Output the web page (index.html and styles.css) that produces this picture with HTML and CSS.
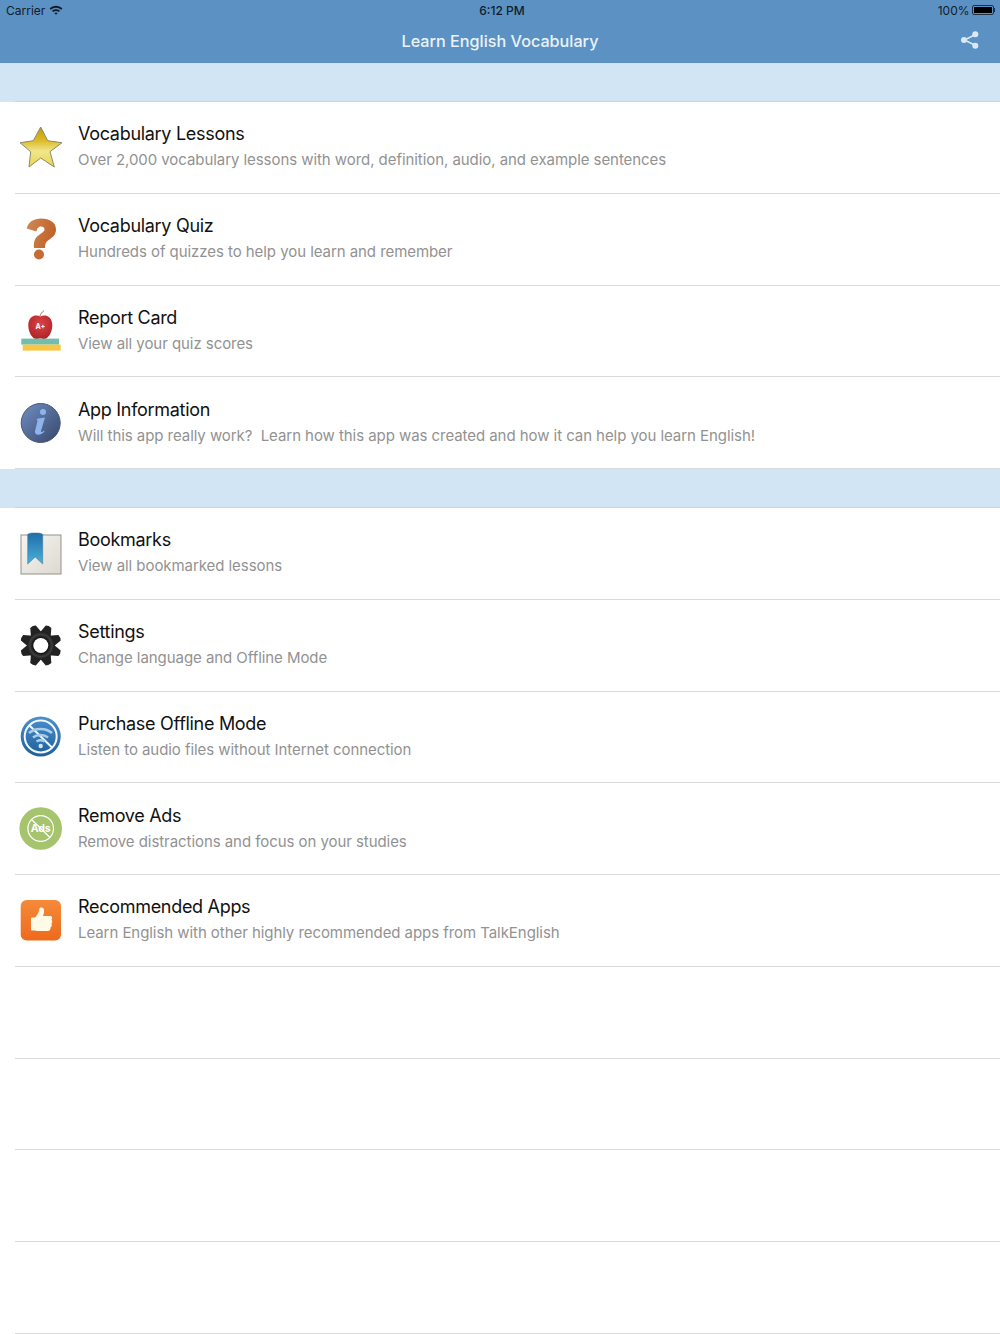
FILE: index.html
```html
<!DOCTYPE html>
<html lang="en">
<head>
    <meta charset="UTF-8">
    <meta name="viewport" content="width=device-width, initial-scale=1.0">
    <title>Learn English Vocabulary</title>
    <link rel="stylesheet" href="styles.css">
</head>
<body>

    <header class="top">
        <div class="status">
            <div class="status-left">
                <span>Carrier</span>
                <svg class="wifi" width="14" height="10" viewBox="0 0 14 10">
                    <path d="M0.6 3.4C4.2 0 9.8 0 13.4 3.4L12.2 4.7C9.2 2 4.8 2 1.8 4.7Z" fill="#111c2b"/>
                    <path d="M3 5.8C5.3 3.8 8.7 3.8 11 5.8L9.8 7C8.2 5.7 5.8 5.7 4.2 7Z" fill="#111c2b"/>
                    <path d="M5.3 8C6.3 7.2 7.7 7.2 8.7 8L7 9.8Z" fill="#111c2b"/>
                </svg>
            </div>
            <div class="status-time">6:12 PM</div>
            <div class="status-right">
                <span>100%</span>
                <span class="battery"><span class="battery-fill"></span></span>
                <span class="battery-tip"></span>
            </div>
        </div>
        <div class="navbar">
            <h1>Learn English Vocabulary</h1>
            <svg class="share" width="20" height="20" viewBox="0 0 20 20">
                <path d="M15.5 4.5L4.5 10L15.5 15.5" fill="none" stroke="#dce9f5" stroke-width="1.5"/>
                <circle cx="15.3" cy="4.3" r="3" fill="#dce9f5"/>
                <circle cx="4" cy="10" r="3" fill="#dce9f5"/>
                <circle cx="15.3" cy="15.7" r="3" fill="#dce9f5"/>
            </svg>
        </div>
    </header>

    <div class="section"></div>

    <div class="row">
        <svg class="icon" width="44" height="44" viewBox="0 0 44 44">
            <defs>
                <linearGradient id="starFill" x1="0" y1="0" x2="0" y2="1">
                    <stop offset="0" stop-color="#bd9a10"/>
                    <stop offset="0.35" stop-color="#dcbc2a"/>
                    <stop offset="0.6" stop-color="#f0e68c"/>
                    <stop offset="1" stop-color="#e9d44e"/>
                </linearGradient>
            </defs>
            <path d="M21.7 1L28.700 14.700L43 16.700L31 25.700L35.300 41L21.700 32L10 41L11.700 25.700L1 16.700L14.300 14.700Z" fill="url(#starFill)" stroke="#8d8a6c" stroke-width="1"/>
        </svg>
        <div class="text">
            <div class="title">Vocabulary Lessons</div>
            <div class="sub">Over 2,000 vocabulary lessons with word, definition, audio, and example sentences</div>
        </div>
    </div>
    <div class="row">
        <svg class="icon" width="44" height="44" viewBox="0 0 44 44">
            <defs>
                <linearGradient id="qFill" x1="0" y1="0" x2="1" y2="0.3">
                    <stop offset="0" stop-color="#d08a58"/>
                    <stop offset="1" stop-color="#c0632a"/>
                </linearGradient>
            </defs>
            <path d="M7.700 10.500C9 4 15 0.500 22 0.500C31 0.500 37 4.500 37 11.500C37 17.500 33 19.500 29 22.500C26.500 24.500 26 26.500 26 30H15C14.500 25 15 20.500 20 17C23.500 14.500 25.500 13.500 25.500 11.500C25.500 9.500 24 8.500 22 8.500C19 8.500 18 11 17.500 13.500Z" fill="url(#qFill)"/>
            <circle cx="20" cy="36.500" r="5" fill="#c56c36"/>
        </svg>
        <div class="text">
            <div class="title">Vocabulary Quiz</div>
            <div class="sub">Hundreds of quizzes to help you learn and remember</div>
        </div>
    </div>
    <div class="row">
        <svg class="icon" width="44" height="44" viewBox="0 0 44 44">
            <defs>
                <radialGradient id="appleFill" cx="0.5" cy="0.35" r="0.7">
                    <stop offset="0" stop-color="#dc4446"/>
                    <stop offset="1" stop-color="#ac2026"/>
                </radialGradient>
            </defs>
            <path d="M21 7C21.500 5 23 3 25 1.600" fill="none" stroke="#9a7a5c" stroke-width="1"/>
            <path d="M21.300 7.500C25 5.500 33.300 6 33.300 16.500C33.300 23.500 29 30 25 30C23.500 30 22.500 29.500 21.300 29.500C20 29.500 19 30 17.500 30C13.500 30 9.300 23.500 9.300 16.500C9.300 6 17.500 5.500 21.300 7.500Z" fill="url(#appleFill)"/>
            <text class="grade" x="21.300" y="20" text-anchor="middle">A+</text>
            <rect x="2.300" y="29.600" width="37.700" height="6" fill="#71bdae"/>
            <rect x="3.700" y="35.600" width="38" height="6" fill="#f6c644"/>
        </svg>
        <div class="text">
            <div class="title">Report Card</div>
            <div class="sub">View all your quiz scores</div>
        </div>
    </div>
    <div class="row">
        <svg class="icon" width="44" height="44" viewBox="0 0 44 44">
            <defs>
                <linearGradient id="infoFill" x1="0" y1="0" x2="1" y2="1">
                    <stop offset="0" stop-color="#6f8fc4"/>
                    <stop offset="1" stop-color="#37466a"/>
                </linearGradient>
            </defs>
            <circle cx="21.700" cy="22" r="19.500" fill="url(#infoFill)" stroke="#4d566b" stroke-width="1"/>
            <circle cx="24" cy="11" r="3" fill="#8fb4ec"/>
            <path d="M19 17.500L26 16.500L22 30C21.700 31.500 23 31.500 25 29.500L25.500 30.500C22.500 34.500 15 35 16 30L18.500 20C18.700 19 18 18.800 17 19Z" fill="#8fb4ec"/>
        </svg>
        <div class="text">
            <div class="title">App Information</div>
            <div class="sub">Will this app really work?&nbsp; Learn how this app was created and how it can help you learn English!</div>
        </div>
    </div>

    <div class="section"></div>

    <div class="row">
        <svg class="icon" width="44" height="44" viewBox="0 0 44 44">
            <defs>
                <linearGradient id="pageFill" x1="0" y1="0" x2="1" y2="1">
                    <stop offset="0" stop-color="#f6f5f1"/>
                    <stop offset="1" stop-color="#dcd9d0"/>
                </linearGradient>
                <linearGradient id="ribbonFill" x1="0" y1="0" x2="0" y2="1">
                    <stop offset="0" stop-color="#1f6ea8"/>
                    <stop offset="1" stop-color="#4bb0dc"/>
                </linearGradient>
            </defs>
            <rect x="2" y="3" width="40" height="39" fill="url(#pageFill)" stroke="#94928a" stroke-width="1"/>
            <path d="M8.700 3C8.700 1.500 11 1 16.200 1C21.400 1 23.700 1.500 23.700 3V32L16.200 25L8.700 32Z" fill="url(#ribbonFill)" stroke="#3c6f8f" stroke-width="0.500"/>
        </svg>
        <div class="text">
            <div class="title">Bookmarks</div>
            <div class="sub">View all bookmarked lessons</div>
        </div>
    </div>
    <div class="row">
        <svg class="icon" width="44" height="44" viewBox="-21.800 -21.500 44 44">
            <defs>
                <path id="tooth" d="M-6 -11L-3 -20.300Q0 -21.500 3 -20.300L6 -11Z" fill="#222"/>
                <radialGradient id="gearFill">
                    <stop offset="0.55" stop-color="#0e0e0e"/>
                    <stop offset="0.8" stop-color="#3d3d3d"/>
                    <stop offset="1" stop-color="#1c1c1c"/>
                </radialGradient>
            </defs>
            <use href="#tooth" transform="rotate(22.500)"/>
            <use href="#tooth" transform="rotate(67.500)"/>
            <use href="#tooth" transform="rotate(112.500)"/>
            <use href="#tooth" transform="rotate(157.500)"/>
            <use href="#tooth" transform="rotate(202.500)"/>
            <use href="#tooth" transform="rotate(247.500)"/>
            <use href="#tooth" transform="rotate(292.500)"/>
            <use href="#tooth" transform="rotate(337.500)"/>
            <circle r="13.800" fill="url(#gearFill)"/>
            <circle r="7.500" fill="#fff"/>
        </svg>
        <div class="text">
            <div class="title">Settings</div>
            <div class="sub">Change language and Offline Mode</div>
        </div>
    </div>
    <div class="row">
        <svg class="icon" width="44" height="44" viewBox="0 0 44 44">
            <defs>
                <linearGradient id="wifiFill" x1="0" y1="0" x2="0" y2="1">
                    <stop offset="0" stop-color="#4b8fcb"/>
                    <stop offset="1" stop-color="#1d5f9c"/>
                </linearGradient>
            </defs>
            <circle cx="21.700" cy="21.500" r="20" fill="url(#wifiFill)"/>
            <circle cx="21.700" cy="21.500" r="16" fill="none" stroke="#f2f7fb" stroke-width="2"/>
            <path d="M10.500 10.500L33 32.500" stroke="#f2f7fb" stroke-width="2"/>
            <path d="M10 18C16 12.500 27 12.500 33 18" fill="none" stroke="#a9cdea" stroke-width="2.500"/>
            <path d="M14 22.500C18 19 25 19 29 22.500" fill="none" stroke="#a9cdea" stroke-width="2.500"/>
            <path d="M17.500 26.500C20 25 23 25 25.500 26.500" fill="none" stroke="#a9cdea" stroke-width="2.500"/>
            <circle cx="21.700" cy="31" r="2.200" fill="#d5e6f4"/>
        </svg>
        <div class="text">
            <div class="title">Purchase Offline Mode</div>
            <div class="sub">Listen to audio files without Internet connection</div>
        </div>
    </div>
    <div class="row">
        <svg class="icon" width="44" height="44" viewBox="0 0 44 44">
            <circle cx="21.700" cy="21.500" r="21.300" fill="#a6c46d"/>
            <circle cx="21.700" cy="21.500" r="12.800" fill="none" stroke="#fff" stroke-width="1.200"/>
            <path d="M12.500 12.500L31 30.500" stroke="#fff" stroke-width="1.200"/>
            <text class="ads" x="21.700" y="25.200" text-anchor="middle">Ads</text>
        </svg>
        <div class="text">
            <div class="title">Remove Ads</div>
            <div class="sub">Remove distractions and focus on your studies</div>
        </div>
    </div>
    <div class="row">
        <svg class="icon" width="44" height="44" viewBox="0 0 44 44">
            <defs>
                <linearGradient id="thumbFill" x1="0" y1="0" x2="0" y2="1">
                    <stop offset="0" stop-color="#f58a3a"/>
                    <stop offset="1" stop-color="#ee6a1c"/>
                </linearGradient>
            </defs>
            <rect x="1.700" y="1" width="40.300" height="40.500" rx="6" fill="url(#thumbFill)"/>
            <path d="M13 18.500H16C18.500 16 20 13 20.500 9.500C20.700 8 24.500 8 25 10.500C25.500 13 24.500 15 24 17H31C33.500 17 33.500 19.500 32.500 20.500C33.500 22 33.500 23.500 32.500 24.500C33 26 33 27.500 31.500 28.500C31.800 30.500 30.500 32 29 32H19C17.500 32 16.500 31.500 16 31.500H13C12.500 31.500 12 31 12 30.500V19.500C12 19 12.500 18.500 13 18.500Z" fill="#fffbe6"/>
        </svg>
        <div class="text">
            <div class="title">Recommended Apps</div>
            <div class="sub">Learn English with other highly recommended apps from TalkEnglish</div>
        </div>
    </div>
    <div class="row"></div>
    <div class="row"></div>
    <div class="row"></div>
    <div class="row"></div>

</body>
</html>
```

FILE: styles.css
```css
html, body {
    margin: 0;
    padding: 0;
}

body {
    width: 1000px;
    height: 1334px;
    overflow: hidden;
    background-color: #fff;
    font-family: 'Inter', 'Liberation Sans', sans-serif;
}

.top {
    height: 63px;
    background-color: #5b92c3;
}

.status {
    display: grid;
    grid-template-columns: 1fr auto 1fr;
    align-items: center;
    height: 20px;
    padding: 0 5px 0 6px;
    font-size: 12px;
    color: #111c2b;
}

.status-left {
    display: flex;
    align-items: center;
    gap: 4px;
}

.status-time {
    font-weight: 500;
    padding-left: 3px;
}

.status-right {
    display: flex;
    align-items: center;
    justify-content: flex-end;
    gap: 2px;
}

.battery {
    display: block;
    width: 22px;
    height: 10px;
    padding: 1px;
    box-sizing: border-box;
    border: 1px solid #1f2f46;
    border-radius: 2px;
}

.battery-fill {
    display: block;
    height: 100%;
    background-color: #000;
}

.battery-tip {
    width: 1.5px;
    height: 4px;
    margin-left: -2px;
    background-color: #1f2f46;
}

.navbar {
    display: flex;
    align-items: center;
    justify-content: center;
    position: relative;
    height: 41px;
}

.navbar h1 {
    margin: 0;
    font-size: 16.200px;
    font-weight: 500;
    color: #eaf2f9;
}

.share {
    position: absolute;
    right: 20px;
    top: 10px;
}

.section {
    position: relative;
    height: 39px;
    background-color: #d2e5f5;
}

.section::after {
    content: "";
    position: absolute;
    left: 15px;
    right: 0;
    bottom: 0;
    height: 1px;
    background-color: #cfd4d8;
}

.row {
    display: flex;
    align-items: center;
    gap: 15px;
    position: relative;
    height: 91.750px;
    box-sizing: border-box;
    padding-left: 19px;
}

.row::after {
    content: "";
    position: absolute;
    left: 15px;
    right: 0;
    bottom: 0;
    height: 1px;
    background-color: #d9d9d9;
}

.icon {
    flex: none;
    overflow: visible;
}

.text {
    margin-top: -2px;
}

.title {
    font-size: 18px;
    line-height: 24px;
    letter-spacing: -0.300px;
    color: #111;
}

.sub {
    margin-top: 3px;
    font-size: 15px;
    line-height: 22px;
    letter-spacing: -0.060px;
    color: #929292;
}

.grade {
    font-size: 7px;
    font-weight: 700;
    fill: #fff;
}

.ads {
    font-size: 10.500px;
    font-weight: 700;
    fill: #fff;
}
```
